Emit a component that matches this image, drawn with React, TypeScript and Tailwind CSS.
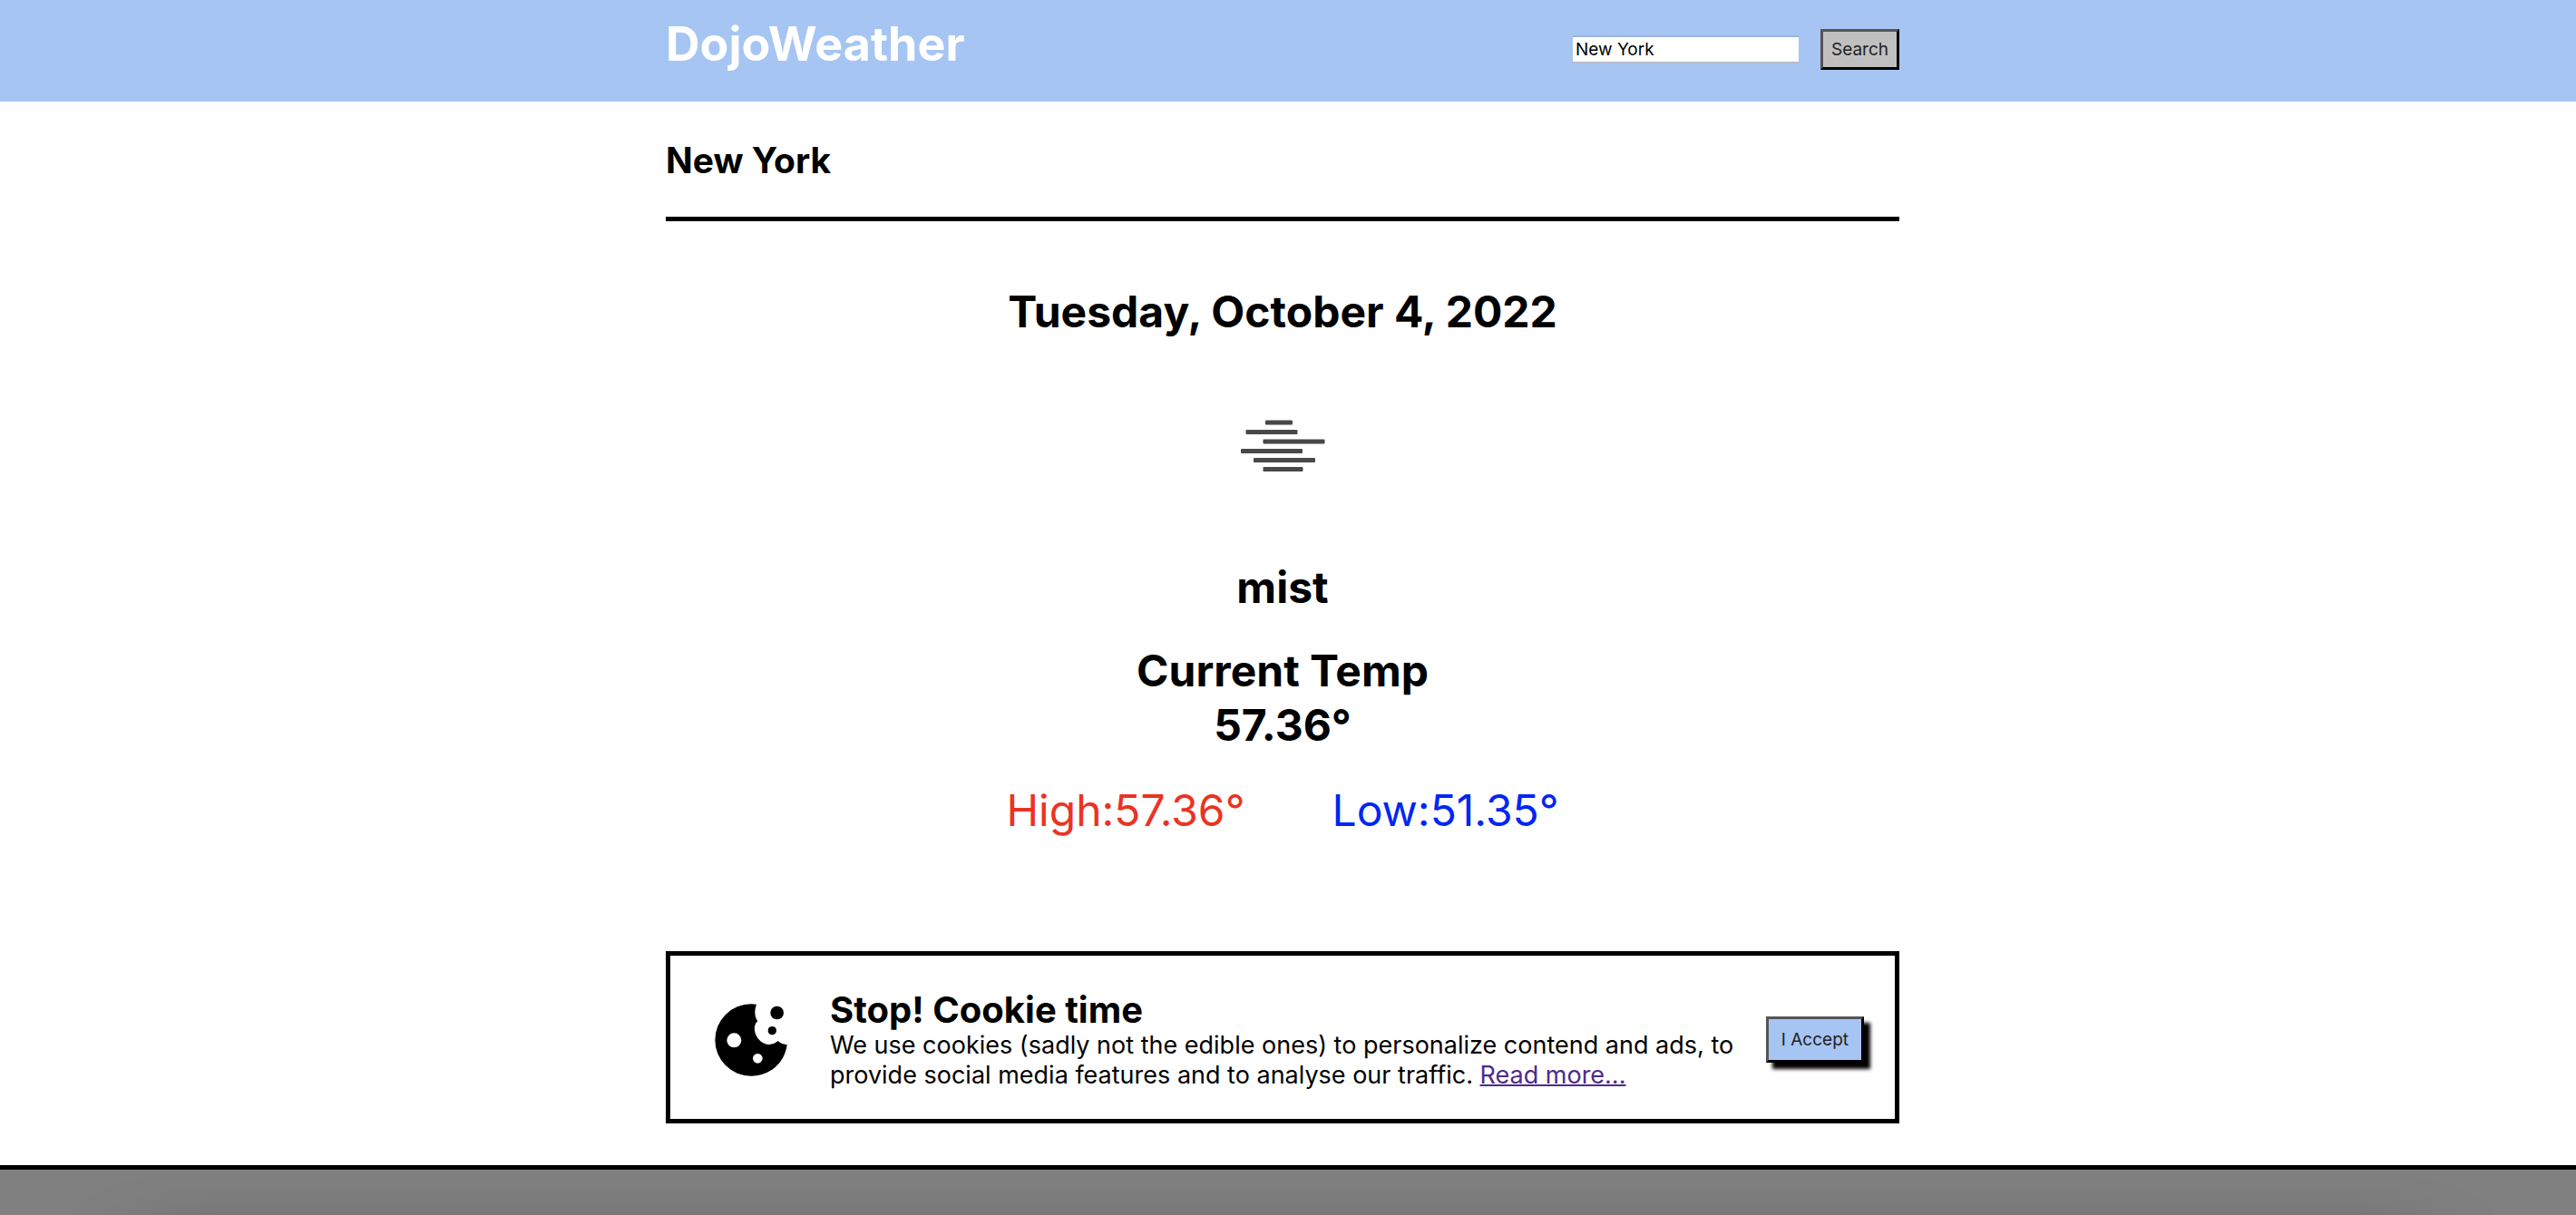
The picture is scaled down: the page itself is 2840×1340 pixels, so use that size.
import { useState } from 'react';

function MistIcon() {
  const bars = [
    [31, 22.5, 30],
    [9.5, 33, 57],
    [28.5, 43.5, 68],
    [4, 54, 68],
    [18, 64, 68],
    [28.5, 74, 44],
  ];
  return (
    <svg viewBox="0 0 100 100" className="mx-auto mt-[67px] size-[100px]" role="img" aria-label="mist">
      {bars.map(([x, y, w]) => (
        <rect key={y} x={x} y={y} width={w} height="5" rx="1" fill="#484848" />
      ))}
    </svg>
  );
}

function CookieIcon() {
  return (
    <svg viewBox="54 48 240 240" className="size-20 shrink-0" aria-hidden="true">
      <path
        fillRule="evenodd"
        d="M192 50C184 72 186 90 196 106C186 114 184 128 187 142C194 170 218 184 234 183C246 182 256 178 263 171C271 179 282 183 293 183C286 244 236 287 174 287A119 119 0 0 1 174 49ZM142 169A24 24 0 1 0 94 169A24 24 0 1 0 142 169ZM212 229A16 16 0 1 0 180 229A16 16 0 1 0 212 229Z"
      />
      <circle cx="260" cy="78" r="22" />
      <circle cx="244" cy="137" r="14" />
    </svg>
  );
}

function Header() {
  const [city, setCity] = useState('New York');
  return (
    <header className="bg-[#a6c5f3] pr-3">
      <div className="mx-auto flex max-w-[1360px] items-start justify-between pt-4 pb-[30px]">
        <h1 className="text-[52px] leading-[66px] font-bold text-white">DojoWeather</h1>
        <form className="mt-4 flex items-center gap-6 text-[19px] leading-[23px]" onSubmit={(e) => e.preventDefault()}>
          <input
            type="text"
            aria-label="City"
            value={city}
            onChange={(e) => setCity(e.target.value)}
            className="h-[31px] w-[249px] border-y-2 border-t-[#98b3dd] border-b-[#b4bccb] bg-white px-[3px]"
          />
          <button
            type="submit"
            className="border-[3px] border-t-[#555] border-r-black border-b-black border-l-[#555] bg-[#c0c0c0] px-[9px] py-2 text-[#222]"
          >
            Search
          </button>
        </form>
      </div>
    </header>
  );
}

function Weather() {
  return (
    <main className="text-center text-5xl/[60px] font-bold">
      <h2 className="border-b-5 border-black pt-10 pb-[37px] text-left text-[39px] leading-[50px]">New York</h2>
      <p className="mt-[70px]">Tuesday, October 4, 2022</p>
      <MistIcon />
      <p className="mt-[77px]">mist</p>
      <p className="mt-8">
        Current Temp
        <br />
        57.36°
      </p>
      <div className="mt-[34px] flex justify-center gap-24 font-normal">
        <p className="text-[#eb3323]">High:57.36°</p>
        <p className="text-[#0026f5]">Low:51.35°</p>
      </div>
    </main>
  );
}

function CookieNotice() {
  return (
    <section className="mt-[125px] mb-[46px] flex items-center border-5 border-black pt-[37px] pr-[34px] pb-8 pl-[49px]">
      <CookieIcon />
      <div className="mr-6 ml-[47px] flex-1">
        <h3 className="text-[40px] leading-[45px] font-bold">Stop! Cookie time</h3>
        <p className="text-[27px] leading-[33px]">
          We use cookies (sadly not the edible ones) to personalize contend and ads, to provide social media features
          and to analyse our traffic.{' '}
          <a href="#cookies" className="text-[#4f2a8c] underline decoration-2">
            Read more...
          </a>
        </p>
      </div>
      <button
        type="button"
        className="border-[3px] border-t-[#555] border-r-black border-b-black border-l-[#555] bg-[#a6c5f3] px-[14px] py-[11px] text-[19px] leading-[23px] text-[#222] shadow-[7px_7px_4px_#000]"
      >
        I Accept
      </button>
    </section>
  );
}

export default function App() {
  return (
    <div className="flex min-h-screen flex-col bg-white font-['Inter',sans-serif] text-black">
      <Header />
      <div className="pr-3">
        <div className="mx-auto max-w-[1360px]">
          <Weather />
          <CookieNotice />
        </div>
      </div>
      <footer className="relative min-h-[55px] flex-1 overflow-hidden border-t-5 border-black bg-[#808080]">
        <div className="absolute top-full right-[172px] left-[160px] mt-16 h-40 shadow-[0_0_92px_#000]" />
      </footer>
    </div>
  );
}
